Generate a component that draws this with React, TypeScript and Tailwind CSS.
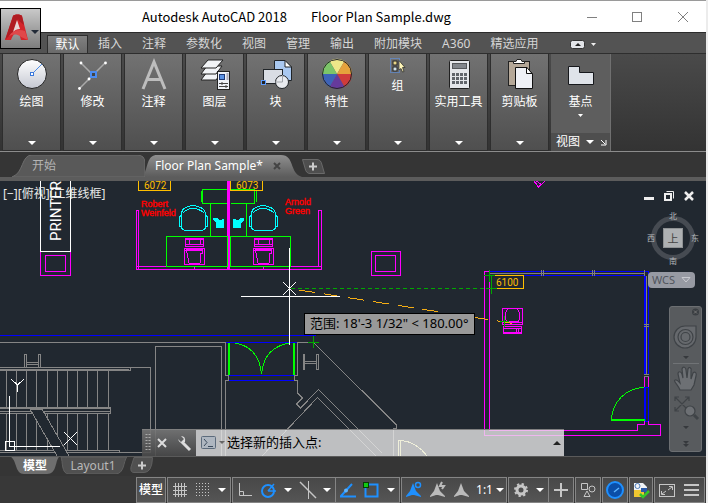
import type { ReactNode } from 'react';

const ui = "font-['Noto_Sans','Noto_Sans_CJK_SC',sans-serif]";

function Caret({ className = '' }: { className?: string }) {
  return (
    <svg className={`h-1 w-2 shrink-0 ${className}`} viewBox="0 0 8 4" aria-hidden="true">
      <path d="M0 0H8L4 4Z" fill="#fff" />
    </svg>
  );
}

function Svg({ w, h, children }: { w: number; h: number; children: ReactNode }) {
  return (
    <svg className="shrink-0" width={w} height={h} viewBox={`0 0 ${w} ${h}`} fill="none" aria-hidden="true">
      {children}
    </svg>
  );
}

/* ---------- ribbon ---------- */

const drawIcon = (
  <Svg w={32} h={32}>
    <defs>
      <linearGradient id="ball" x2="0" y2="1"><stop stopColor="#fff" /><stop offset="1" stopColor="#c5c8d2" /></linearGradient>
    </defs>
    <circle cx="16" cy="16" r="14.5" fill="url(#ball)" stroke="#222" />
    <path d="M17 15L26 6" stroke="#4c8ce6" />
    <rect x="14.5" y="14.5" width="3" height="3" fill="#fff" stroke="#3a78dc" />
  </Svg>
);
const modifyIcon = (
  <Svg w={32} h={32}>
    <path d="M4 5L16 17M28 5L2 31" stroke="#aaa" strokeWidth="1.5" />
    <g fill="#fff"><circle cx="4" cy="5" r="1.4" /><circle cx="28.5" cy="5" r="1.4" /><circle cx="2.5" cy="30.5" r="1.4" /><circle cx="12" cy="21" r="1.4" /></g>
    <rect x="14" y="14" width="5" height="5" fill="#444" stroke="#4c8cf0" strokeWidth="2" />
  </Svg>
);
const annotateIcon = (
  <Svg w={32} h={32}>
    <path d="M5 31L16 4L27 31M9 21.5H23" stroke="#bdbdbd" strokeWidth="3" />
  </Svg>
);
const layerIcon = (
  <Svg w={32} h={32}>
    <g fill="#f1f3f6" stroke="#222">
      <path d="M8 14H23L17 22H2Z" /><path d="M8 8H23L17 16H2Z" /><path d="M9 2H24L17 10H2Z" />
      <rect x="18.5" y="13.5" width="12" height="18" fill="#eef2f8" />
    </g>
    <rect x="20.5" y="16.5" width="5" height="5" fill="#5b93e6" stroke="#203a78" />
    <path d="M28.5 15V22" stroke="#aab" strokeWidth="2" />
    <path d="M20 25.5H29M20 28.5H29M23 24V27M27 27V30" stroke="#444" />
  </Svg>
);
const blockIcon = (
  <Svg w={32} h={32}>
    <path d="M14.5 2.5H25L31.5 9V22.5H14.5Z" fill="#a9c8f0" stroke="#202428" />
    <path d="M25 2.5V9H31.5Z" fill="#fff" stroke="#202428" />
    <rect x="3.5" y="11.5" width="19" height="14" fill="#d9dde4" stroke="#202428" />
    <circle cx="22" cy="24" r="6.5" fill="#e9ebef" stroke="#202428" />
    <path d="M22.5 17V24H15" stroke="#a0a4aa" />
    <rect x="1.5" y="22.5" width="4" height="4" fill="#222" stroke="#5b9bff" />
  </Svg>
);
const propIcon = (
  <Svg w={32} h={32}>
    <path d="M16 16L8.5 3A15 15 0 0 1 23.5 3Z" fill="#efe789" />
    <path d="M16 16L23.5 3A15 15 0 0 1 31 16Z" fill="#e5a23c" />
    <path d="M16 16H31A15 15 0 0 1 23.5 29Z" fill="#cf3b3b" />
    <path d="M16 16L23.5 29A15 15 0 0 1 8.5 29Z" fill="#663a9c" />
    <path d="M16 16L8.5 29A15 15 0 0 1 1 16Z" fill="#3d63b8" />
    <path d="M16 16H1A15 15 0 0 1 8.5 3Z" fill="#7cc569" />
    <circle cx="16" cy="16" r="14.5" stroke="#262626" />
  </Svg>
);
const groupIcon = (
  <Svg w={16} h={16}>
    <path d="M.5 .5H9.5V14.5H.5Z" stroke="#5b9bff" strokeDasharray="1 1" />
    <rect x="3" y="3" width="4" height="4" fill="#e8d68a" stroke="#222" />
    <rect x="3" y="9" width="4" height="4" fill="#cfe0e8" stroke="#222" />
    <path d="M9 2.5L15 9.5H12.5L14 13.5L12.5 14L11 10.5L9 12Z" fill="#fff6b8" stroke="#222" strokeWidth=".7" />
  </Svg>
);
const calcIcon = (
  <Svg w={32} h={32}>
    <rect x="6.5" y="2.5" width="20" height="28" rx="1" fill="#e4e6ea" stroke="#202020" />
    <rect x="9.5" y="5.5" width="14" height="5" fill="#82868c" stroke="#55585c" />
    {[15, 19, 23].map((y) => [9, 13, 17, 21].map((x) => <rect key={`${x}-${y}`} x={x} y={y} width="3" height="3" fill="#60646a" />))}
  </Svg>
);
const clipIcon = (
  <Svg w={32} h={32}>
    <rect x="4.5" y="3.5" width="21" height="24" fill="#b5a898" stroke="#222" />
    <path d="M9.5 5.5V3.5H12L13 1.5H17L18 3.5H20.5V5.5Z" fill="#fff" stroke="#222" />
    <path d="M11.5 9.5H22L28.5 15.5V30.5H11.5Z" fill="#eff1f6" stroke="#111" />
    <path d="M22.5 9V15.5H28Z" fill="#fff" stroke="#111" />
  </Svg>
);

const panels = [
  { name: '绘图', icon: drawIcon },
  { name: '修改', icon: modifyIcon },
  { name: '注释', icon: annotateIcon },
  { name: '图层', icon: layerIcon },
  { name: '块', icon: blockIcon },
  { name: '特性', icon: propIcon },
  { name: '组', icon: groupIcon },
  { name: '实用工具', icon: calcIcon },
  { name: '剪贴板', icon: clipIcon },
];

const ribbonTabs = ['插入', '注释', '参数化', '视图', '管理', '输出', '附加模块', 'A360', '精选应用'];

function TitleBar() {
  return (
    <header className="flex h-8 items-center border-t border-[#9a9a9a] bg-white pl-[142px] font-['Noto_Sans_CJK_SC',sans-serif] text-[13px] text-black">
      <h1 className="flex gap-6">
        <span>Autodesk AutoCAD 2018</span>
        <span>Floor Plan Sample.dwg</span>
      </h1>
      <div className="ml-auto flex pr-4 text-[#808080]">
        <button className="flex h-7 w-[46px] items-center justify-center" aria-label="Minimize"><Svg w={10} h={10}><path d="M0 5.5H10" stroke="currentColor" /></Svg></button>
        <button className="flex h-7 w-11 items-center justify-center" aria-label="Maximize"><Svg w={10} h={10}><rect x=".5" y=".5" width="9" height="9" stroke="currentColor" /></Svg></button>
        <button className="flex h-7 w-[31px] items-center justify-end pr-[2px]" aria-label="Close"><Svg w={10} h={10}><path d="M0 0L10 10M10 0L0 10" stroke="currentColor" /></Svg></button>
      </div>
    </header>
  );
}

function AppButton() {
  return (
    <button className="absolute top-2 left-0 z-10 flex h-[41px] w-[41px] items-center border border-black bg-linear-to-b from-[#c9c9c9] to-[#7d7d7d] pl-[3px]" aria-label="Application menu">
      <Svg w={35} h={32}>
        <path d="M1 27L9 3C10 1 17 1 18 3L24 27H17L15 20C12 19 9 21 7 27Z" fill="#d4242a" />
        <path d="M9 3C10 1 17 1 18 3L20 12L15 8L14 6L10 18L1 27Z" fill="#b01c22" />
        <path d="M13 7L16 16C13 16 11 17 9 19Z" fill="#e8d5d5" />
        <path d="M5 23C9 17 15 16 21 18L24 27L17 24C12 20 8 22 5 23Z" fill="#e0484a" />
        <path d="M27 17H35L31 21Z" fill="#222b38" />
      </Svg>
    </button>
  );
}

function Ribbon() {
  return (
    <div className="border-t border-[#2c2c2c]">
      <nav className="flex h-5 items-end bg-[#535353] pl-[47px] text-xs text-[#d6d6d6]">
        <button className="h-[18px] w-[41px] border border-b-0 border-[#2e2e2e] bg-linear-to-b from-[#808080] to-[#6a6a6a] text-white">默认</button>
        {ribbonTabs.map((t) => <button key={t} className="h-[18px] px-2.5">{t}</button>)}
        <button className="ml-3 flex h-[18px] items-center gap-[6px] px-2.5" aria-label="Ribbon display">
          <Svg w={15} h={9}><rect x=".5" y=".5" width="14" height="8" rx="2" fill="#e2e4e8" stroke="#333" /><path d="M5 6H11L8 3Z" fill="#222" /></Svg>
          <Svg w={5} h={3}><path d="M0 0H5L2.5 3Z" fill="#eee" /></Svg>
        </button>
      </nav>
      <div className="flex h-[99px] gap-[2px] border-y border-t-[#2e2e2e] border-b-[#8c8c8c] bg-[#333] bg-linear-to-b from-[#4a4a4a] to-[#333] pl-[2px]">
        {panels.map((p) => (
          <button key={p.name} className="flex w-[59px] flex-col items-center border-x border-b border-x-[#2e2e2e] border-b-[#2e2e2e] bg-linear-to-b from-[#727272] to-[#4f4f4f] pt-1 text-xs text-white">
            {p.icon}
            <span className="mt-1 whitespace-nowrap">{p.name}</span>
            <Caret className="mt-auto mb-[5px]" />
          </button>
        ))}
        <section className="flex w-[60px] flex-col border-r border-[#707070] bg-[#5e5e5e] text-xs text-white">
          <button className="flex grow flex-col items-center gap-1 pt-2">
            <Svg w={28} h={24}>
              <path d="M1.5 4.5H12.5V10.5H26.5V22.5H1.5Z" fill="#dfe3e9" stroke="#16181c" />
            </Svg>
            <span className="mt-1">基点</span>
            <Svg w={5} h={3}><path d="M0 0H5L2.5 3Z" fill="#fff" /></Svg>
          </button>
          <div className="flex h-[18px] items-center gap-[6px] bg-[#4e4e4e] pl-[5px]">
            视图
            <Caret />
            <Svg w={7} h={7}><path d="M1 1L5 5M6 1V6H1" stroke="#fff" /></Svg>
          </div>
        </section>
      </div>
    </div>
  );
}

function FileTabs() {
  return (
    <nav className="relative flex h-[29px] border-b-4 border-[#5c5c5c] bg-[#353535] pt-[3px] pl-3 text-xs">
      <button className="relative h-[22px] w-[133px] pl-5 text-left text-[#b4b4b4]">
        <svg className="absolute inset-0 size-full" viewBox="0 0 133 22" preserveAspectRatio="none" aria-hidden="true"><path d="M0 22C12 18 9 0 20 0H125Q133 0 133 8V22Z" fill="#595959" stroke="#6d6d6d" /></svg>
        <span className="relative">开始</span>
      </button>
      <button className="relative flex h-[22px] w-[157px] items-center pl-[10px] text-white">
        <svg className="absolute inset-0 size-full" viewBox="0 0 157 22" preserveAspectRatio="none" aria-hidden="true">
          <defs><linearGradient id="tab" x2="0" y2="1"><stop stopColor="#8f8f8f" /><stop offset="1" stopColor="#5c5c5c" /></linearGradient></defs>
          <path d="M-4 22C4 17 0 0 12 0H136C150 0 144 18 157 22Z" fill="url(#tab)" />
        </svg>
        <span className="relative">Floor Plan Sample*</span>
        <span className="relative ml-[10px]"><Svg w={8} h={8}><path d="M1 1L7 7M7 1L1 7" stroke="#444" strokeWidth="2" /></Svg></span>
      </button>
      <button className="relative mt-1 h-[15px] w-[23px]" aria-label="New drawing">
        <Svg w={23} h={15}><path d="M.5 .5H15Q19 .5 20 6L22.5 14.5H8Q4 14.5 3 9Z" fill="#4e4e4e" stroke="#6a6a6a" /><path d="M7 7.5H15M11 3.5V11.5" stroke="#ccc" strokeWidth="2" /></Svg>
      </button>
    </nav>
  );
}

/* ---------- drawing area ---------- */

function Chair({ x }: { x: number }) {
  return (
    <g transform={`translate(${x} 205)`} stroke="#0ff">
      <path d="M2.5 7.5Q4 1.5 14 .5Q24 1.5 26.5 7.5V22Q26 25.5 22 25.5H7Q3 25.5 2.5 22ZM4 8Q8 3.5 14 3.5T25 8" />
      <path d="M2.5 10L.5 12V21L3 23M26.5 10L28.5 12V21L26 23" />
    </g>
  );
}

function Desktop({ x, y }: { x: number; y: number }) {
  return (
    <g transform={`translate(${x} ${y})`} stroke="#f0f">
      <path d="M1.5 .5H19.5V8.5H1.5ZM2 1.5H19M5.5 1V6M16.5 1V6M2 6.5H19" />
      <path d="M.5 10.5H20.5V26.5H.5ZM2 12.5H18V15H17L16 25H5L3 15ZM2 11.5H19" />
    </g>
  );
}

const stairs = [6, 16, 26, 36, 47, 57, 67, 77, 87, 97, 108];

function FloorPlan() {
  return (
    <svg className="absolute top-0 left-0 font-['Roboto',sans-serif]" width="706" height="275" viewBox="0 181 706 275" fill="none" shapeRendering="crispEdges" aria-label="Floor plan">
      {/* printer niche */}
      <path d="M40.5 181V251.5H70.5V181" stroke="#fff" />
      <text transform="translate(61 241) rotate(-90)" fill="#fff" fontSize="15">PRINTER</text>
      <path d="M40.5 251.5V275.5H70.5V251.5M45.5 255.5H65.5V271.5H45.5Z" stroke="#f0f" />
      <path d="M371.5 251.5H400.5V275.5H371.5ZM375.5 255.5H395.5V271.5H375.5Z" stroke="#f0f" />

      {/* offices */}
      <g stroke="#f0f">
        <path d="M136.5 269.5V210.5H138.5V269M136 266.5H321M136 269.5H322M318.5 267V210.5H321.5V269M194.5 266V269M263.5 266V269" />
        <path d="M228.5 181V269" strokeWidth="3" />
      </g>
      <g stroke="#0f0">
        <path d="M166.5 236.5H227.5V266.5H166.5ZM230.5 236.5H290.5V266.5H230.5Z" />
        <path d="M226.5 189.5H202.5V203.5H226.5M230.5 189.5H254.5V203.5H230.5M210.5 203V236M246.5 203V236M201.5 191V202M256.5 191V202" />
      </g>
      <Chair x={179} /><Chair x={249} />
      <g fill="#0ff"><path d="M213 218H217L219 220L224 219V228H216V223L213 220Z" /><path d="M244 218H240L238 220L233 219V228H241V223L244 220Z" /></g>
      <Desktop x={184} y={238} /><Desktop x={253} y={238} />
      <g fill="#ffbf00" fontSize="10"><text x="144" y="189">6072</text><text x="236" y="189">6073</text></g>
      <path d="M138.5 181V190.5H170.5V181M230.5 181V190.5H262.5V181" stroke="#ffbf00" />
      <g className="font-['Liberation_Sans',sans-serif]" fill="#f00" stroke="#f00" strokeWidth=".4" fontSize="9"><text x="141" y="207">Robert</text><text x="141" y="216">Weinfeld</text><text x="285" y="205">Arnold</text><text x="285" y="214">Green</text></g>

      {/* corridor */}
      <path d="M0 335.5H316M225 342.5H297M229 375.5H294M229 380.5H294" stroke="#00f" />
      <path d="M229 343V375M294 343V375" stroke="#0f0" strokeWidth="2" />
      <path d="M235 343Q259 347 261.5 374Q264 347 290 343" stroke="#0f0" />
      <g stroke="#858585">
        <path d="M0 342.5H225.5V375.5H228.5V380.5H225.5V456M315 342.5H297.5V375.5H294.5V380.5H297.5V393L302.5 398L296.5 404L300.5 408L318.5 389.5L382 453" />
        <path d="M262 456L317.5 397.5L376 456M313 342L396.5 425V428.5H393.5V456M155.5 456V346.5H221.5V456" />
        <path d="M0 367.5H150.5V452.5H119M0 370.5H130.5V367M0 369.5H129M24.5 367V354.5H26.5V367M38.5 367V354.5H40.5V367M26 362.5H38M26 364.5H38" />
        <path d="M303.5 354.5H304.5V369.5H303.5ZM316.5 354.5H318.5V369.5H316.5ZM305 361.5H316M305 363.5H316" />
        {stairs.map((x) => <path key={x} d={`M${x}.5 371V407M${x}.5 413V450`} />)}
        <path d="M0 407.5H110.5V413.5H0M0 408.5H110M0 411.5H110M0 450.5H119.5V452M0 452.5H119" />
        <path d="M30 409L57 456H69L42 409Z" fill="#212830" />
      </g>

      {/* office 6100 */}
      <g stroke="#00f">
        <path d="M490 271.5H648.5V374M490 275.5H644.5V374M644.5 387H648.5V421H644.5Z" />
        <path d="M645.5 276V374M645.5 387V421" />
      </g>
      <path d="M490 273.5H644M646.5 276V374M541.5 270V276M543.5 270V276M592.5 270V276M594.5 270V276M644.5 270V276M644 324.5H649M644 326.5H649M644 374.5H649M644 376.5H649" stroke="#808080" />
      <path d="M489.5 275V271.5H484.5V435.5H660.5V424.5H648.5V421M489.5 275V430.5H637.5V424.5H644.5V421M644.5 377V387M648.5 377V387M534 181L538.5 187L545 181M536 181L541 184" stroke="#f0f" />
      <path d="M611 420H645" stroke="#0f0" strokeWidth="2" />
      <path d="M611.5 420A33 33 0 0 1 644 387.5" stroke="#0f0" />
      <path d="M491.5 275.5H523.5V288.5H491.5Z" stroke="#ffbf00" />
      <text x="496" y="286" fill="#ffbf00" fontSize="10">6100</text>
      <g stroke="#f0f">
        <path d="M502.5 308.5H522.5V324.5H502.5ZM507.5 309L505.5 313V319L506.5 321.5H518.5L519.5 319V313L517.5 309M503 322.5H522" />
        <path d="M503.5 326.5H521.5V333H503.5ZM504 328.5H521M516.5 329V333M518.5 329V333M504 332.5H521" />
      </g>

      {/* door behind the command line */}
      <path d="M398.5 456V440.5H400.5V456M401 440.5Q417 442 427 456" stroke="#ffff9f" />

      {/* tracking */}
      <path d="M291 288.5H492" stroke="#00a800" strokeDasharray="4 3" />
      <path d="M299 290L520 324.5" stroke="#f5ad14" strokeDasharray="16 9" />
      <path d="M491.5 275V294M486 288.5H497M489.5 270V282M484 275.5H495M313.5 336V348M308 342.5H319M504.5 316V327M500 321.5H509" stroke="#00a800" />
      <path d="M289.5 248V345M241 296.5H340" stroke="#fff" />
      <path d="M283 282L296 295M296 282L283 295" stroke="#fff" />

      {/* UCS icon */}
      <path d="M5.5 441.5H14.5V450.5H5.5ZM9.5 396V446.5H60M11 379L17.5 385L24 379M17.5 385V392M64 432L77 445M77 432L64 445" stroke="#fff" />
    </svg>
  );
}

function ViewCube() {
  return (
    <div className="absolute top-[30px] right-2 h-[54px] w-[52px] text-[8px] leading-[9px] text-[#b5b8bb]">
      <div className="absolute top-[5px] left-[5px] size-11 rounded-full border-[5px] border-[#464b52]" />
      <button className="absolute top-[17px] left-[17px] flex size-5 items-center justify-center border border-[#8f9294] bg-[#aeb1b3] text-[11px] text-[#444]">上</button>
      <span className="absolute top-0 left-[23px]">北</span>
      <span className="absolute top-[22px] left-[1px]">西</span>
      <span className="absolute top-[22px] right-[-1px]">东</span>
      <span className="absolute bottom-0 left-[23px]">南</span>
    </div>
  );
}

function NavBar() {
  return (
    <div className="absolute top-[125px] right-[4px] flex w-[33px] flex-col items-center rounded-[3px] border border-[#6c6f72] bg-[#5e6164]/90">
      <Svg w={31} h={144}>
        <circle cx="25.5" cy="5" r="3.5" fill="#3b3f43" /><path d="M24 3.5L27 6.5M27 3.5L24 6.5" stroke="#777" />
        <g stroke="#3f4347" strokeWidth="1.2">
          <path d="M15 19H26V30A11 11 0 1 1 15 19Z" fill="#66696d" /><circle cx="15.5" cy="30" r="7.5" /><circle cx="15.5" cy="30" r="4.5" />
          <path d="M10 83C8 78 3 74 5 73C7 72 9 75 10 76L8 67C8 64 11 64 12 67L13 71L12 62C13 59 16 60 16 63L17 71L18 62C19 59 22 61 21 64L21 72L23 66C25 64 27 66 26 69L24 78L21 83Z" fill="#6d7074" />
          <path d="M5 90L19 104M19 90L5 104M5 94V90H9M15 90H19V94M5 100V104H9" />
          <circle cx="20" cy="104" r="5" fill="#6d7074" /><path d="M24 108L28 112" strokeWidth="3" />
        </g>
        <path d="M3 56.5H29" stroke="#707376" />
        <path d="M13 49H19L16 52ZM13 119H19L16 122ZM13 134H19L16 137ZM13 137H19L16 140Z" fill="#36393d" />
      </Svg>
    </div>
  );
}

function Canvas() {
  return (
    <main className="relative h-[275px] overflow-hidden bg-[#212830]">
      <FloorPlan />
      <div className="absolute top-[5px] left-[3px] text-xs text-[#e8e8e8]">[−][俯视][二维线框]</div>
      <div className="absolute top-[10px] right-[12px] flex gap-[10px]">
        <button aria-label="Minimize drawing"><Svg w={10} h={10}><path d="M0 7.5H10" stroke="#eee" strokeWidth="3" /></Svg></button>
        <button aria-label="Restore drawing"><Svg w={10} h={10}><path d="M2.5 .5H9.5V7.5" stroke="#eee" /><rect x="1" y="3" width="6" height="6" stroke="#eee" strokeWidth="2" /></Svg></button>
        <button aria-label="Close drawing"><Svg w={10} h={10}><path d="M1 1L9 9M9 1L1 9" stroke="#eee" strokeWidth="2.5" /></Svg></button>
      </div>
      <ViewCube />
      <button className="absolute top-[91px] right-[11px] flex h-4 w-[47px] items-center justify-between rounded-[4px] bg-[#979aa3] px-1 text-[11px] text-[#50545c]">
        WCS
        <Svg w={10} h={6}><path d="M1 .5H9L5 5Z" stroke="#c8cad0" /></Svg>
      </button>
      <NavBar />
      <div role="tooltip" className="absolute top-[132px] left-[304px] flex h-[22px] items-center border border-black bg-[#999] px-[5px] text-[13px] whitespace-nowrap text-black">
        范围: 18'-3 1/32" &lt; 180.00°
      </div>
      <form className="absolute bottom-0 left-[142px] flex h-[27px] w-[422px] items-stretch border-t border-[#808080] text-[13px]">
        <div className="flex w-[54px] items-center bg-linear-to-b from-[#777]/90 to-[#4a4a4a]/90">
          <Svg w={54} h={26}>
            <path d="M4.5 4V22M7.5 4V22" stroke="#aaa" strokeDasharray="1 2" strokeWidth="2" />
            <path d="M16 9L24 17M24 9L16 17" stroke="#ddd" strokeWidth="2" />
            <path d="M40 12L48 20" stroke="#ddd" strokeWidth="3" /><path d="M36 9L39 12L42 9L39 6Q44 6 43 12Q38 15 36 9Z" fill="#ddd" />
          </Svg>
        </div>
        <label className="flex grow items-center bg-[#ebebeb]/78 pl-[5px]">
          <Svg w={24} h={14}><rect x=".5" y=".5" width="14" height="12" rx="1" fill="#aeb6c0" stroke="#5c6b7c" /><path d="M3 3L6 6.5L3 10M7 10.5H12" stroke="#3a4a5c" /><path d="M18 5H24L21 8Z" fill="#666" /></Svg>
          <input className="ml-[2px] w-0 grow bg-transparent text-black outline-none" defaultValue="选择新的插入点:" aria-label="Command" />
          <span className="mr-[3px]"><Svg w={8} h={4}><path d="M0 4H8L4 0Z" fill="#222" /></Svg></span>
        </label>
      </form>
    </main>
  );
}

/* ---------- bottom bars ---------- */

function LayoutTabs() {
  return (
    <nav className="flex h-5 border-t border-[#5a5a5a] bg-[#353535] pl-[11px] text-xs">
      <button className="relative h-[17px] w-12 leading-[17px] font-bold text-white">
        <svg className="absolute inset-0 size-full" viewBox="0 0 48 17" preserveAspectRatio="none" aria-hidden="true"><path d="M0 0H48C44 4 46 17 36 17H13C4 17 6 4 0 0Z" fill="#6e6e6e" /></svg>
        <span className="relative">模型</span>
      </button>
      <button className="relative h-[17px] w-[68px] leading-[17px] text-[#b8b8b8]">
        <svg className="absolute inset-0 size-full" viewBox="0 0 68 17" preserveAspectRatio="none" aria-hidden="true"><path d="M2 0H68C64 4 66 17 56 17H10C2 17 4 4 2 0Z" fill="#505050" stroke="#606060" /></svg>
        <span className="relative">Layout1</span>
      </button>
      <button className="ml-[3px] h-4 w-6" aria-label="New layout">
        <Svg w={24} h={16}><path d="M4 .5H22.5Q22 15.5 14 15.5H4Q0 15.5 1 10Z" fill="#505050" stroke="#606060" /><path d="M8 8.5H16M12 4.5V12.5" stroke="#ccc" strokeWidth="2" /></Svg>
      </button>
    </nav>
  );
}

function Cell({ w, label, children }: { w: string; label: string; children: ReactNode }) {
  return <button className={`flex h-full items-center justify-center ${w}`} aria-label={label}>{children}</button>;
}

function Box({ children, className = '' }: { children: ReactNode; className?: string }) {
  return <div className={`flex h-[26px] border border-[#858585] bg-linear-to-b from-[#484848] to-[#555] ${className}`}>{children}</div>;
}

function Figure({ color, mark }: { color: string; mark?: ReactNode }) {
  return (
    <Svg w={18} h={18}>
      <path d="M8 2L11 10L16 15V16L9 14H7L1 16V15L5 10Z" fill={color} />
      {mark}
    </Svg>
  );
}

function StatusBar() {
  return (
    <footer className="flex h-[27px] justify-end gap-px bg-[#383838] pt-px pr-px text-xs text-white">
      <Box className="w-[30px]"><Cell w="w-full" label="模型"><span className="font-medium whitespace-nowrap">模型</span></Cell></Box>
      <Box className="w-[64px]">
        <Cell w="w-6" label="Grid"><Svg w={16} h={16}><path d="M3.5 1V15M6.5 1V15M9.5 1V15M12.5 1V15M1 4.5H15M1 8.5H15M1 12.5H15" stroke="#c6c6c6" /></Svg></Cell>
        <Cell w="w-6" label="Snap"><Svg w={16} h={16}><path d="M1 1.5H15M1 4.5H15M1 7.5H15M1 10.5H15M1 13.5H15" stroke="#c6c6c6" strokeDasharray="1 2" /></Svg></Cell>
        <Cell w="w-4" label="Snap options"><Caret /></Cell>
      </Box>
      <div className="flex">
        <Box className="w-[104px]">
          <Cell w="w-6" label="Ortho"><Svg w={14} h={14}><path d="M1.5 0V12.5H14M1.5 8.5H5.5V12" stroke="#c6c6c6" /></Svg></Cell>
          <Cell w="w-6" label="Polar"><Svg w={17} h={17}><circle cx="8" cy="9" r="6" stroke="#1e90ff" strokeWidth="2" /><path d="M8 9H16M8 9L14 2" stroke="#1e90ff" strokeWidth="1.5" /></Svg></Cell>
          <Cell w="w-4" label="Polar options"><Caret /></Cell>
          <Cell w="w-6" label="Isometric"><Svg w={18} h={20}><path d="M9.5 1V19" stroke="#c6c6c6" /><path d="M1 2L17 18" stroke="#c6c6c6" strokeWidth="1.5" /></Svg></Cell>
          <Cell w="w-4" label="Isometric options"><Caret /></Cell>
        </Box>
        <Box className="-ml-px w-[65px]">
          <Cell w="w-6" label="Tracking"><Svg w={18} h={16}><path d="M1 14.5H17M2 14L13 2" stroke="#1e90ff" strokeWidth="2" /><circle cx="7" cy="8.5" r="2" fill="#5db4ff" /></Svg></Cell>
          <Cell w="w-6" label="Object snap"><Svg w={16} h={16}><rect x="2.5" y="2.5" width="12" height="12" stroke="#1e90ff" strokeWidth="2" /><rect x=".5" y=".5" width="5" height="5" fill="#12c912" stroke="#053d05" /></Svg></Cell>
          <Cell w="w-4" label="Object snap options"><Caret /></Cell>
        </Box>
      </div>
      <Box className="w-[106px]">
        <Cell w="w-6" label="Annotation visibility"><Figure color="#1e90ff" mark={<circle cx="13" cy="4" r="2.5" stroke="#1e90ff" strokeWidth="1.5" />} /></Cell>
        <Cell w="w-6" label="Auto scale"><Figure color="#bbb" mark={<path d="M13 1L11 5H15L13 8" stroke="#bbb" strokeWidth="2" />} /></Cell>
        <Cell w="w-6" label="Annotation scale"><Figure color="#bbb" /></Cell>
        <Cell w="w-8" label="Scale"><span className="flex items-center gap-[3px]">1:1<Caret /></span></Cell>
      </Box>
      <div className="flex">
        <Box className="w-[41px]">
          <Cell w="w-6" label="Workspace">
            <Svg w={14} h={14}><circle cx="7" cy="7" r="4" stroke="#c6c6c6" strokeWidth="3" /><circle cx="7" cy="7" r="6" stroke="#c6c6c6" strokeWidth="2" strokeDasharray="2.3 2.4" /></Svg>
          </Cell>
          <Cell w="w-4" label="Workspace options"><Caret /></Cell>
        </Box>
        <Box className="-ml-px w-[26px]"><Cell w="w-6" label="Add"><Svg w={14} h={14}><path d="M0 7H14M7 0V14" stroke="#c6c6c6" strokeWidth="2" /></Svg></Cell></Box>
      </div>
      <Box className="w-[26px]"><Cell w="w-6" label="Isolate"><Svg w={16} h={16}><path d="M1.5 1.5H7.5V7.5H1.5ZM4 14.5L7 9L10 14.5Z" stroke="#c6c6c6" /><circle cx="12" cy="7" r="3" stroke="#c6c6c6" /></Svg></Cell></Box>
      <Box className="w-[26px]"><Cell w="w-6" label="Performance"><Svg w={20} h={20}><circle cx="10" cy="10" r="8" fill="#0a4ea8" stroke="#1e90ff" strokeWidth="2" /><path d="M9 12L14 8" stroke="#5db4ff" strokeWidth="1.5" /></Svg></Cell></Box>
      <Box className="w-6">
        <Cell w="w-full" label="Plot">
          <Svg w={17} h={17}><path d="M1 1H10L14 5V9H1Z" fill="#f1f3f6" /><rect x="1" y="8" width="10" height="7" fill="#f0c630" /><path d="M8 6H14V10H8Z" fill="#2a5aa8" /><circle cx="4.5" cy="4" r="2.5" stroke="#4a7ab8" /><path d="M7 12L10 15L16 9" stroke="#36c42a" strokeWidth="2.5" /></Svg>
        </Cell>
      </Box>
      <Box className="w-[51px]">
        <Cell w="w-6" label="Clean screen"><Svg w={16} h={13}><rect x=".5" y=".5" width="15" height="12" stroke="#c6c6c6" /><path d="M9 6L13 3M10 2.5H13.5V6M7 7L3 10M2.5 7V10.5H6" stroke="#c6c6c6" /></Svg></Cell>
        <Cell w="w-6" label="Customize"><Svg w={15} h={12}><path d="M0 1H15M0 6H15M0 11H15" stroke="#c6c6c6" strokeWidth="2" /></Svg></Cell>
      </Box>
    </footer>
  );
}

export default function App() {
  return (
    <div className={`bg-[#ececec] pr-[2px] ${ui}`}>
      <div className="relative">
        <TitleBar />
        <AppButton />
        <Ribbon />
        <FileTabs />
        <Canvas />
        <LayoutTabs />
        <StatusBar />
      </div>
    </div>
  );
}
